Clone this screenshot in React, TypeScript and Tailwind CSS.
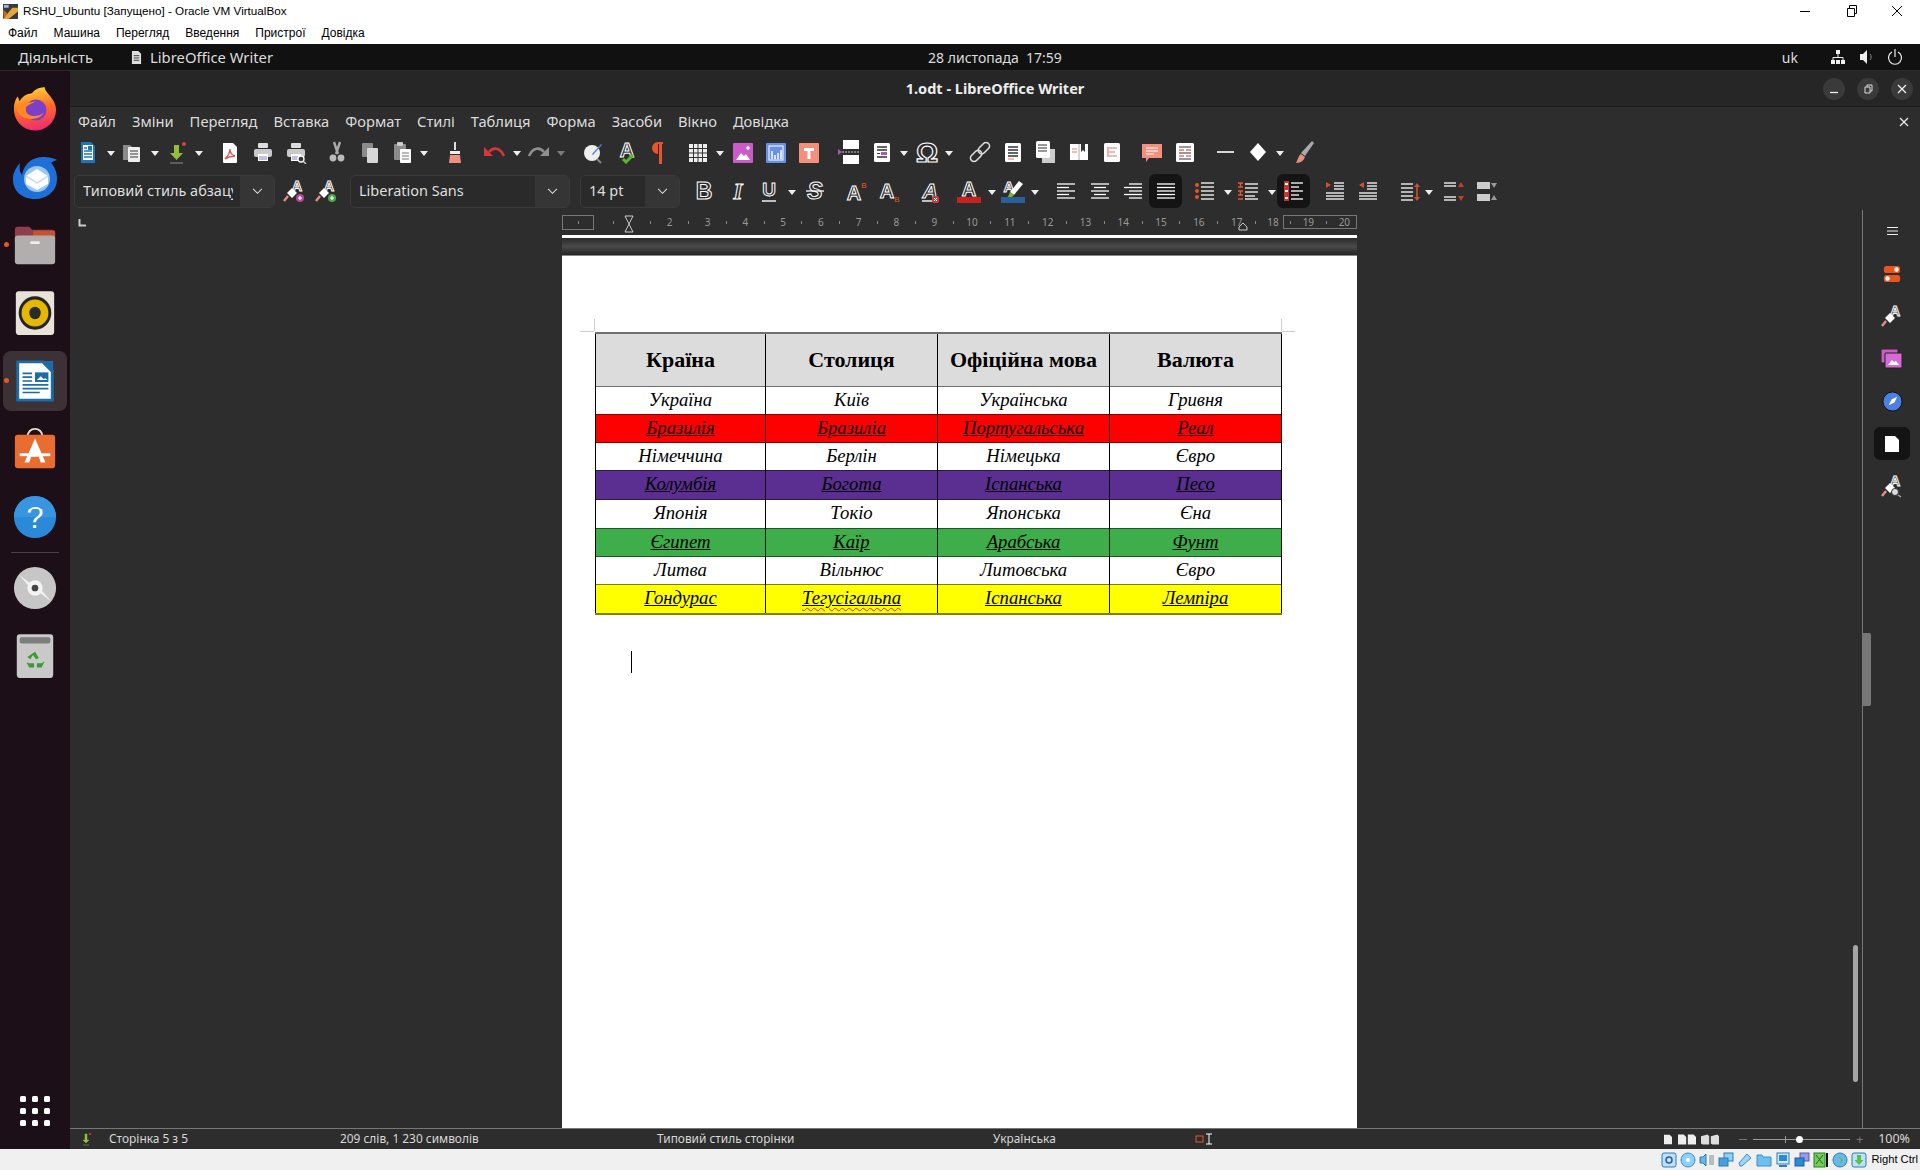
import type { ReactNode } from 'react';
import clsx from 'clsx';

const Svg = ({ children, className }: { children: ReactNode; className?: string }) => (
  <svg viewBox="0 0 24 24" className={clsx('w-[24px] h-[24px] shrink-0', className)}>
    {children}
  </svg>
);

const Caret = ({ className }: { className?: string }) => (
  <svg viewBox="0 0 8 5" className={clsx('w-[8px] h-[5px] shrink-0 mt-[3px]', className)}>
    <path d="M0 0h8L4 5z" fill="#eee" />
  </svg>
);

const Chevron = () => (
  <svg viewBox="0 0 12 8" className="w-[11px] h-[7px]">
    <path d="M1 1l5 5 5-5" fill="none" stroke="#ddd" strokeWidth="1.2" />
  </svg>
);

const Letter = ({ ch, x = 12, y = 18, size = 20, italic, serif, stroke = '#fff', fill = 'none' }: { ch: string; x?: number; y?: number; size?: number; italic?: boolean; serif?: boolean; stroke?: string; fill?: string }) => (
  <text x={x} y={y} textAnchor="middle" fontFamily={serif ? 'Liberation Serif, serif' : 'Liberation Sans, sans-serif'} fontWeight="700" fontStyle={italic ? 'italic' : 'normal'} fontSize={size} fill={fill} stroke={stroke} strokeWidth="1">
    {ch}
  </text>
);

const Rows = ({ rows, color = '#fff' }: { rows: [number, number, number][]; color?: string }) => (
  <>
    {rows.map(([x1, x2, y], i) => (
      <path key={i} d={`M${x1} ${y}H${x2}`} stroke={color} strokeWidth="1.3" />
    ))}
  </>
);

const Page = ({ x = 5, y = 3, w = 14, h = 18, fill = '#fff' }: { x?: number; y?: number; w?: number; h?: number; fill?: string }) => (
  <rect x={x} y={y} width={w} height={h} rx="1.5" fill={fill} />
);

// toolbar row 1
const NewDoc = (p: { className?: string }) => (
  <Svg {...p}>
    <path d="M5 2h10l4 4v17H5z" fill="#1d76b8" />
    <rect x="7" y="5" width="10" height="15" fill="#fff" />
    <path d="M8 8h3M8 11h8M8 14h8M8 17h8" stroke="#1d76b8" strokeWidth="1.3" />
    <rect x="12" y="6" width="4" height="4" fill="#1d76b8" />
  </Svg>
);
const OpenDoc = (p: { className?: string }) => (
  <Svg {...p}>
    <path d="M3 5h7l2 2v13H3z" fill="#8b8b8b" />
    <rect x="8" y="7" width="12" height="15" rx="1" fill="#eee" />
    <path d="M10 11h8M10 14h8M10 17h8" stroke="#777" strokeWidth="1.3" />
  </Svg>
);
const SaveDoc = (p: { className?: string }) => (
  <Svg {...p}>
    <path d="M9 5h5v8h4l-6.5 7L5 13h4z" fill="#95bc3c" />
    <circle cx="19" cy="4" r="2" fill="#d8423a" />
    <path d="M5 23h13" stroke="#777" strokeWidth="1.3" />
  </Svg>
);
const Pdf = (p: { className?: string }) => (
  <Svg {...p}>
    <path d="M5 3h10l4 4v15a1 1 0 0 1-1 1H6a1 1 0 0 1-1-1z" fill="#fff" />
    <path d="M12 9c0 4-3 8-5 10 3-2 7-3 10-3-3-1-5-4-5-7z" fill="none" stroke="#e0504a" strokeWidth="1.3" />
  </Svg>
);
const Printer = ({ className, glass }: { className?: string; glass?: boolean }) => (
  <Svg className={className}>
    <rect x="7" y="3" width="10" height="5" rx="1" fill="#ddd" />
    <rect x="3" y="9" width="18" height="8" rx="2" fill="#c9c9c9" />
    <rect x="7" y="14" width="10" height="7" fill="#fff" />
    <path d="M8 17h8M8 19h8" stroke="#8a7ec8" strokeWidth="1" />
    {glass && (
      <>
        <circle cx="17" cy="19" r="3" fill="#333" stroke="#fff" strokeWidth="1.3" />
        <path d="M19 21l3 3" stroke="#ccc" strokeWidth="1.5" />
      </>
    )}
  </Svg>
);
const Cut = (p: { className?: string }) => (
  <Svg {...p}>
    <path d="M9 2l4 12M15 2l-4 12" stroke="#aaa" strokeWidth="2.4" />
    <circle cx="8" cy="18" r="3.4" fill="#bbb" />
    <circle cx="16" cy="18" r="3.4" fill="#bbb" />
  </Svg>
);
const Copy = (p: { className?: string }) => (
  <Svg {...p}>
    <rect x="4" y="3" width="11" height="14" rx="1" fill="#8b8b8b" />
    <rect x="9" y="8" width="11" height="15" rx="1" fill="#d7d7d7" />
  </Svg>
);
const Paste = (p: { className?: string }) => (
  <Svg {...p}>
    <rect x="4" y="4" width="12" height="16" rx="1" fill="#8b8b8b" />
    <rect x="7" y="2" width="6" height="4" rx="1" fill="#ccc" />
    <rect x="10" y="9" width="11" height="14" rx="1" fill="#fff" />
    <path d="M12 13h7M12 16h7M12 19h7" stroke="#777" strokeWidth="1.2" />
  </Svg>
);
const Clear = (p: { className?: string }) => (
  <Svg {...p}>
    <path d="M11 2h2v8h-2z" fill="#ddd" />
    <path d="M7 11h10v3H7z" fill="#eee" />
    <path d="M7 15h10l1 8H6z" fill="#ee8f80" />
  </Svg>
);
const Undo = (p: { className?: string }) => (
  <Svg {...p}>
    <path d="M7 12c4-5 11-5 15 4" fill="none" stroke="#d8353d" strokeWidth="2.6" />
    <path d="M2 7v9h9z" fill="#d8353d" />
  </Svg>
);
const Redo = (p: { className?: string }) => (
  <Svg {...p}>
    <path d="M17 12c-4-5-11-5-15 4" fill="none" stroke="#8f8f8f" strokeWidth="2.6" />
    <path d="M22 7v9h-9z" fill="#8f8f8f" />
  </Svg>
);
const FindReplace = (p: { className?: string }) => (
  <Svg {...p}>
    <circle cx="11" cy="13" r="8" fill="#eee" />
    <path d="M11 14l9-10 1 1-9 10z" fill="#4a86d8" />
    <path d="M16 19l4 4" stroke="#888" strokeWidth="2" />
  </Svg>
);
const Spell = (p: { className?: string }) => (
  <Svg {...p}>
    <Letter ch="A" y={17} size={20} />
    <path d="M8 19l3 3 7-7" fill="none" stroke="#5cb531" strokeWidth="3" />
  </Svg>
);
const Pilcrow = (p: { className?: string }) => (
  <Svg {...p}>
    <path d="M10 2h7v2h-1v20h-3V4h-1v10a6 6 0 0 1 0-12z" fill="#e6552c" />
  </Svg>
);
const TableIco = (p: { className?: string }) => (
  <Svg {...p}>
    <path d="M3 4h18v18H3z" fill="#eee" />
    <path d="M3 8.500h18M3 13h18M3 17.500h18M7.500 4v18M12 4v18M16.500 4v18" stroke="#333" strokeWidth="1" />
  </Svg>
);
const ImageIco = (p: { className?: string }) => (
  <Svg {...p}>
    <rect x="2" y="3" width="20" height="20" rx="1" fill="#c95cc8" />
    <path d="M5 20l5-7 3 3 2-2 4 6z" fill="#fff" />
    <circle cx="17" cy="8" r="1.7" fill="#fff" />
  </Svg>
);
const ChartIco = (p: { className?: string }) => (
  <Svg {...p}>
    <rect x="2" y="3" width="20" height="20" rx="1" fill="#6a8fe8" />
    <rect x="5" y="6" width="14" height="14" fill="none" stroke="#fff" strokeWidth="1" />
    <path d="M8 19v-8M11 19v-4M14 19v-6M17 19v-9" stroke="#fff" strokeWidth="1.5" />
  </Svg>
);
const TextBox = (p: { className?: string }) => (
  <Svg {...p}>
    <rect x="2" y="3" width="20" height="20" rx="1" fill="#f48f7b" />
    <path d="M7 8h10v3h-3.500v8h-3v-8H7z" fill="#fff" />
  </Svg>
);
const PageBreak = (p: { className?: string }) => (
  <Svg {...p}>
    <rect x="6" y="0" width="16" height="9" fill="#fff" />
    <rect x="6" y="15" width="16" height="9" fill="#fff" />
    <path d="M1 9l4 3-4 3z" fill="#a55fa8" />
    <path d="M5 12h17" stroke="#ccc" strokeDasharray="2 1" />
  </Svg>
);
const Field = (p: { className?: string }) => (
  <Svg {...p}>
    <Page x={4} y={3} w={16} h={19} />
    <path d="M7 7h10M7 10h10M7 17h10" stroke="#333" strokeWidth="1.3" />
    <rect x="11" y="12" width="6" height="3" fill="#a55fa8" />
    <path d="M7 13.500h3" stroke="#333" />
  </Svg>
);
const Omega = (p: { className?: string }) => (
  <Svg className={clsx('scale-[1.2]', p.className)}>
    <Letter ch="Ω" y={20} size={23} />
  </Svg>
);
const LinkIco = (p: { className?: string }) => (
  <Svg {...p}>
    <g fill="none" stroke="#ddd" strokeWidth="1.6" transform="rotate(-45 12 12)">
      <rect x="0" y="8.500" width="13" height="7" rx="3.500" />
      <rect x="11" y="8.500" width="13" height="7" rx="3.500" />
    </g>
  </Svg>
);
const Footnote = (p: { className?: string }) => (
  <Svg {...p}>
    <Page x={4} y={3} w={16} h={19} />
    <path d="M7 7h10M7 10h10M7 13h10M7 16h10" stroke="#333" strokeWidth="1.3" />
    <path d="M7 19h6" stroke="#e07a6a" />
  </Svg>
);
const Endnote = (p: { className?: string }) => (
  <Svg {...p}>
    <rect x="9" y="9" width="13" height="14" fill="#ccc" />
    <Page x={3} y={1} w={14} h={17} />
    <path d="M5 5h9M5 8h9M5 11h9" stroke="#333" strokeWidth="1.2" />
  </Svg>
);
const Bookmark = (p: { className?: string }) => (
  <Svg {...p}>
    <path d="M3 4h18v16h-18z" fill="#fff" />
    <path d="M12 4v16" stroke="#aaa" />
    <path d="M14 4h4v8l-2-2-2 2z" fill="#333" />
    <path d="M5 9h5M5 12h5" stroke="#e07a6a" />
  </Svg>
);
const CrossRef = (p: { className?: string }) => (
  <Svg {...p}>
    <Page x={4} y={3} w={16} h={19} />
    <path d="M9 8h8M9 12h6M9 16h8M8 7v10" stroke="#e07a6a" strokeWidth="1.2" fill="none" />
  </Svg>
);
const Comment = (p: { className?: string }) => (
  <Svg {...p}>
    <path d="M2 4h20v14H9l-3 4v-4H2z" fill="#f48f7b" />
    <path d="M6 8h12M6 11h12M6 14h8" stroke="#fff" strokeWidth="1.2" />
  </Svg>
);
const Track = (p: { className?: string }) => (
  <Svg {...p}>
    <Page x={3} y={3} w={18} h={19} />
    <path d="M6 7h12M6 13h12M6 19h12" stroke="#333" strokeWidth="1.2" />
    <path d="M6 10h5M13 10h5M6 16h5M13 16h5" stroke="#c33" strokeWidth="1.2" />
  </Svg>
);
const LineIco = (p: { className?: string }) => (
  <Svg {...p}>
    <path d="M3 12h17" stroke="#fff" strokeWidth="1.6" />
  </Svg>
);
const Diamond = (p: { className?: string }) => (
  <Svg {...p}>
    <path d="M12 3l8 9-8 9-8-9z" fill="#fff" />
  </Svg>
);
const Brush = (p: { className?: string }) => (
  <Svg {...p}>
    <path d="M20 1l2 2-9 13-4-3z" fill="#aaa" />
    <path d="M9 14l4 3c-1 3-4 6-9 6 2-3 2-7 5-9z" fill="#e98f80" />
  </Svg>
);

// toolbar row 2
const StyleRoller = ({ className, badge, glass }: { className?: string; badge?: string; glass?: boolean }) => (
  <Svg className={className}>
    <Letter ch="A" x={15} y={12} size={14} />
    <path d="M5 14l5-5 5 5-5 5z" fill="#fff" />
    <path d="M6 17l-4 5" stroke="#e98f80" strokeWidth="2.4" />
    {badge && (
      <>
        <circle cx="18" cy="19" r="4" fill={badge} />
        <path d="M16 19h4M18 17v4" stroke="#fff" strokeWidth="1.2" />
      </>
    )}
    {glass && (
      <>
        <circle cx="15" cy="18" r="3.500" fill="#ddd" stroke="#333" />
        <path d="M18 21l3 2" stroke="#aaa" strokeWidth="1.5" />
      </>
    )}
  </Svg>
);
const Glyph = ({ ch, italic, serif, className, line, strike }: { ch: string; italic?: boolean; serif?: boolean; className?: string; line?: boolean; strike?: boolean }) => (
  <Svg className={className}>
    <Letter ch={ch} y={line ? 17 : 20} size={line ? 19 : 23} italic={italic} serif={serif} />
    {line && <path d="M5 22h14" stroke="#fff" strokeWidth="1.4" />}
    {strike && <path d="M3 12h18" stroke="#fff" strokeWidth="1.3" />}
  </Svg>
);
const Super = (p: { className?: string }) => (
  <Svg {...p}>
    <Letter ch="A" x={10} y={21} size={20} />
    <text x="20" y="9" textAnchor="middle" fontSize="8" fill="#e6552c" fontFamily="Liberation Sans">B</text>
  </Svg>
);
const Sub = (p: { className?: string }) => (
  <Svg {...p}>
    <Letter ch="A" x={10} y={19} size={20} />
    <text x="20" y="23" textAnchor="middle" fontSize="8" fill="#e6552c" fontFamily="Liberation Sans">B</text>
  </Svg>
);
const ClearFmt = (p: { className?: string }) => (
  <Svg {...p}>
    <Letter ch="A" y={19} size={21} italic />
    <path d="M4 22h12" stroke="#fff" strokeWidth="1.4" />
    <rect x="14" y="17" width="7" height="7" rx="2" fill="#d8353d" />
    <path d="M16 19l3 3M19 19l-3 3" stroke="#fff" />
  </Svg>
);
const FontColor = (p: { className?: string }) => (
  <Svg {...p}>
    <Letter ch="A" y={17} size={20} />
    <rect x="0" y="18" width="24" height="6" fill="#c9211e" />
  </Svg>
);
const Highlight = (p: { className?: string }) => (
  <Svg {...p}>
    <Letter ch="A" x={8} y={13} size={15} />
    <path d="M18 2l4 3-9 11-4-3z" fill="#fff" />
    <path d="M9 13l4 3-2 2H7z" fill="#77bc2d" />
    <rect x="0" y="18" width="24" height="6" fill="#2a6099" />
  </Svg>
);
const Align = ({ rows, className }: { rows: [number, number, number][]; className?: string }) => (
  <Svg className={className}>
    <Rows rows={rows} />
  </Svg>
);
const Bullets = (p: { className?: string }) => (
  <Svg {...p}>
    <circle cx="4" cy="6" r="2" fill="#e6552c" />
    <circle cx="4" cy="12" r="2" fill="#e6552c" />
    <circle cx="4" cy="18" r="2" fill="#e6552c" />
    <Rows rows={[[8, 21, 4], [8, 21, 8], [8, 21, 12], [8, 21, 16], [8, 21, 20]]} />
  </Svg>
);
const Numbers = (p: { className?: string }) => (
  <Svg {...p}>
    <path d="M2 4h5M2 8h5M2 12h5M2 16h5M2 20h5M4.500 4v4M4.500 12v4" stroke="#e6552c" strokeWidth="1.4" />
    <Rows rows={[[9, 22, 5], [9, 22, 9], [9, 22, 13], [9, 19, 17], [9, 22, 20]]} />
  </Svg>
);
const Outline = (p: { className?: string }) => (
  <Svg {...p}>
    <rect x="2" y="2" width="5" height="20" fill="#c33" />
    <path d="M3 5h3M3 12h3M3 19h3" stroke="#fff" strokeWidth="2" />
    <Rows rows={[[9, 21, 4], [9, 17, 8], [9, 21, 12], [9, 17, 16], [9, 21, 20]]} />
  </Svg>
);
const Indent = ({ className, out }: { className?: string; out?: boolean }) => (
  <Svg className={className}>
    <path d={out ? 'M8 3v6L3 6z' : 'M3 3v6l5-3z'} fill="#d0502f" />
    <Rows rows={[[11, 21, 4], [11, 21, 7], [11, 21, 10], [3, 21, 14], [3, 21, 17], [3, 21, 20]]} />
  </Svg>
);
const Spacing = (p: { className?: string }) => (
  <Svg {...p}>
    <Rows rows={[[3, 15, 5], [3, 15, 9], [3, 15, 13], [3, 15, 17], [3, 15, 21]]} />
    <path d="M19 4l3 4h-6zM19 22l3-4h-6z" fill="#d0502f" />
    <path d="M19 8v10" stroke="#d0502f" strokeWidth="1.6" />
  </Svg>
);
const ParaInc = (p: { className?: string }) => (
  <Svg {...p}>
    <Rows rows={[[2, 14, 4], [2, 14, 7], [2, 14, 18], [2, 14, 21]]} />
    <path d="M19 3l3 5h-6zM19 22l3-5h-6z" fill="#c63d2b" />
  </Svg>
);
const ParaDec = (p: { className?: string }) => (
  <Svg {...p}>
    <rect x="2" y="3" width="13" height="7" fill="#ccc" />
    <rect x="2" y="15" width="13" height="7" fill="#ccc" />
    <path d="M16 4h6l-3 5zM16 21h6l-3-5z" fill="#999" />
  </Svg>
);

const rightRows: [number, number, number][] = [[8, 21, 5], [3, 21, 8.500], [8, 21, 12], [3, 21, 15.500], [8, 21, 19]];

const Combo = ({ label, className, textW }: { label: string; className: string; textW: string }) => (
  <div className={clsx('flex h-[33px] shrink-0 rounded-[5px] border border-[#3a3a3a] bg-[#2a2a2a] overflow-hidden', className)}>
    <div className={clsx('flex items-center ml-[8px] text-[14.500px] text-[#dedede] whitespace-nowrap overflow-hidden', textW)}>{label}</div>
    <div className="ml-auto w-[34px] flex items-center justify-center bg-[#353535]">
      <Chevron />
    </div>
  </div>
);

// dock icons
const Firefox = () => (
  <svg viewBox="0 0 48 48" className="w-[46px] h-[46px]">
    <defs>
      <linearGradient id="ff" x1="0.3" y1="0" x2="0.5" y2="1">
        <stop offset="0" stopColor="#ffd93a" />
        <stop offset="0.5" stopColor="#ff6d24" />
        <stop offset="1" stopColor="#ef2a72" />
      </linearGradient>
    </defs>
    <path d="M34 1c0 6 12 12 12 24a22 22 0 1 1-44-1c0-6 2-11 4-13l2 5c2-5 8-8 10-8 6 0 2-5 16-7z" fill="url(#ff)" />
    <circle cx="25" cy="25" r="11" fill="#7d3fc8" />
    <path d="M4 22c8-6 15-4 21-6-6 4-13 4-10 11 2 5 12 6 18 1-4 9-26 10-29-6z" fill="#ff8a23" />
  </svg>
);
const Thunderbird = () => (
  <svg viewBox="0 0 48 48" className="w-[48px] h-[48px]">
    <path d="M24 46C10 46 1 37 2 24 3 17 7 12 9 10c-1 6 0 9 2 12C13 10 22 4 32 4c5 0 11 1 14 3-3 1-5 2-6 3 4 4 6 10 6 16 0 12-10 20-22 20z" fill="#1f6fd8" />
    <circle cx="26" cy="26" r="13" fill="#9bc7f2" />
    <path d="M15 23l11-7 11 7v8l-11 6-11-6z" fill="#fff" />
    <path d="M15 23l11 7 11-7" fill="none" stroke="#c9ddf3" strokeWidth="1.5" />
  </svg>
);
const Files = () => (
  <svg viewBox="0 0 48 48" className="w-[46px] h-[46px]">
    <path d="M3 8a3 3 0 0 1 3-3h12l3 3h21a3 3 0 0 1 3 3v12H3z" fill="#8f3f4c" />
    <path d="M22 9h21a2 2 0 0 1 2 2v6H22z" fill="#c7522f" />
    <rect x="3" y="14" width="42" height="30" rx="3" fill="#b2aeae" />
    <rect x="19" y="20" width="10" height="3" rx="1" fill="#eee" />
  </svg>
);
const Rhythmbox = () => (
  <svg viewBox="0 0 48 48" preserveAspectRatio="none" className="w-[46px] h-[50px]">
    <rect x="4" y="3" width="40" height="42" rx="3" fill="#e8e3d9" />
    <ellipse cx="24" cy="24" rx="17" ry="16" fill="#242424" />
    <ellipse cx="24" cy="24" rx="14" ry="13" fill="#e6b800" />
    <circle cx="24" cy="24" r="6" fill="#2b2b2b" />
  </svg>
);
const WriterLogo = () => (
  <svg viewBox="0 0 48 48" className="w-[46px] h-[46px]">
    <path d="M6 4h26l10 10v30H6z" fill="#fff" stroke="#1b6ca8" strokeWidth="3" />
    <path d="M32 3l11 0v11z" fill="#1b6ca8" />
    <rect x="24" y="15" width="14" height="10" fill="#1b6ca8" />
    <path d="M26 23l4-4 3 3 2-1 2 2z" fill="#fff" />
    <path d="M11 16h10M11 20h10M11 24h10M11 28h27M11 32h27M11 36h18" stroke="#1b6ca8" strokeWidth="1.800" />
  </svg>
);
const AppStore = () => (
  <svg viewBox="0 0 48 48" className="w-[46px] h-[46px]">
    <path d="M16 12c0-12 16-12 16 0" fill="none" stroke="#e9d9cc" strokeWidth="2" />
    <rect x="3" y="9" width="42" height="35" rx="3" fill="#e96c30" />
    <path d="M24 13l11 25h-5l-2-6h-8l-2 6h-5z" fill="#fff" />
    <path d="M8 30h32" stroke="#fff" strokeWidth="3" />
  </svg>
);
const Help = () => (
  <svg viewBox="0 0 48 48" className="w-[46px] h-[46px]">
    <circle cx="24" cy="24" r="22" fill="#2b8ad8" />
    <path d="M2 24a22 22 0 0 1 44 0z" fill="#3795e2" />
    <text x="24" y="36" textAnchor="middle" fontFamily="Liberation Sans" fontSize="32" fill="#fff">?</text>
  </svg>
);
const Disc = () => (
  <svg viewBox="0 0 48 48" className="w-[46px] h-[46px]">
    <circle cx="24" cy="24" r="22" fill="#c6c6c6" />
    <path d="M7 10l16 12-3 3zM41 38L25 26l3-3z" fill="#f0f0f0" />
    <circle cx="24" cy="24" r="8" fill="#f3f3f3" />
    <circle cx="24" cy="24" r="3.500" fill="#444" />
  </svg>
);
const Trash = () => (
  <svg viewBox="0 0 48 48" preserveAspectRatio="none" className="w-[46px] h-[50px]">
    <rect x="5" y="3" width="38" height="42" rx="3" fill="#c9c9c9" />
    <rect x="8" y="6" width="32" height="6" rx="2" fill="#7d7d7d" />
    <path d="M24 20l4 6-3 1-3-4-3 4-3-2zM15 30l3 5h5v-4h-5zM34 29l-3 6h-5v-4h5z" fill="#3b9a35" />
  </svg>
);

const dockApps = [
  { el: <Firefox /> },
  { el: <Thunderbird /> },
  { el: <Files />, dot: true },
  { el: <Rhythmbox /> },
  { el: <WriterLogo />, dot: true, active: true },
  { el: <AppStore /> },
  { el: <Help /> },
];

const Dock = () => (
  <aside className="w-[70px] shrink-0 bg-[#1c0f18] flex flex-col items-center pt-[4px] pb-[23px]">
    {dockApps.map((a, i) => (
      <div key={i} className="relative h-[68px] w-full flex items-center justify-center">
        {a.active && <div className="absolute left-[3px] top-[4px] w-[64px] h-[60px] rounded-[8px] bg-[#3c3236]" />}
        {a.dot && <div className="absolute left-[4px] top-[31px] w-[5px] h-[5px] rounded-full bg-[#e9571f]" />}
        <div className="relative">{a.el}</div>
      </div>
    ))}
    <div className="w-[48px] h-px bg-[#4a3f46] my-[1px]" />
    <div className="h-[68px] flex items-center"><Disc /></div>
    <div className="h-[68px] flex items-center"><Trash /></div>
    <div className="mt-auto grid grid-cols-3 gap-[6px]">
      {Array.from({ length: 9 }).map((_, i) => (
        <div key={i} className="w-[6px] h-[6px] rounded-[1.500px] bg-white" />
      ))}
    </div>
  </aside>
);

const VBoxBar = () => (
  <>
    <div className="h-[22px] bg-white flex items-center pl-[3px] font-['Liberation_Sans',sans-serif] text-[11.700px] text-black">
      <svg viewBox="0 0 16 16" className="w-[15px] h-[15px] mr-[5px]">
        <rect width="16" height="16" fill="#3a3a3a" />
        <path d="M0 16L10 4l6 0v4L6 16z" fill="#e8a33d" />
        <path d="M0 6l5 4-4 5z" fill="#c66a1e" />
        <rect x="1" y="1" width="5" height="3" fill="#9fb8d8" />
      </svg>
      RSHU_Ubuntu [Запущено] - Oracle VM VirtualBox
      <div className="ml-auto flex items-center">
        <div className="w-[46px] flex justify-center">
          <svg viewBox="0 0 12 12" className="w-[12px] h-[12px]"><path d="M1 6.500h10" stroke="#000" /></svg>
        </div>
        <div className="w-[46px] flex justify-center">
          <svg viewBox="0 0 12 12" className="w-[12px] h-[12px]"><path d="M2.500 3.500h7v8h-7zM4.500 3.500v-3h7v8h-2" fill="none" stroke="#000" /></svg>
        </div>
        <div className="w-[46px] flex justify-center">
          <svg viewBox="0 0 12 12" className="w-[12px] h-[12px]"><path d="M1 1l10 10M11 1L1 11" stroke="#000" /></svg>
        </div>
      </div>
    </div>
    <div className="h-[22px] bg-white flex items-center gap-[16px] pl-[8px] font-['Liberation_Sans',sans-serif] text-[12px] text-black">
      {['Файл', 'Машина', 'Перегляд', 'Введення', 'Пристрої', 'Довідка'].map((m) => (
        <span key={m}>{m}</span>
      ))}
    </div>
  </>
);

const TopBar = () => (
  <div className="h-[27px] bg-[#111111] border-b border-[#2a2a2a] flex items-center text-[14.800px] text-[#dcdcdc] relative">
    <span className="ml-[18px]">Діяльність</span>
    <svg viewBox="0 0 12 14" className="w-[11px] h-[13px] ml-[38px]">
      <path d="M1 0h7l3 3v11H1z" fill="#ddd" />
      <path d="M3 5h6M3 7.500h6M3 10h6" stroke="#333" />
    </svg>
    <span className="ml-[8px]">LibreOffice Writer</span>
    <span className="absolute left-[70px] right-0 text-center text-[14px] pointer-events-none">28 листопада&nbsp;&nbsp;17:59</span>
    <span className="ml-auto text-[14px]">uk</span>
    <svg viewBox="0 0 16 16" className="w-[16px] h-[16px] ml-[32px]">
      <path d="M6 1h4v4H6zM1 11h4v4H1zM11 11h4v4h-4zM6 11h4v4H6z" fill="#eee" />
      <path d="M8 5v4M3 11V8.500h10V11" fill="none" stroke="#eee" />
    </svg>
    <svg viewBox="0 0 16 16" className="w-[16px] h-[16px] ml-[13px]">
      <path d="M1 5h3l4-4v14l-4-4H1z" fill="#eee" />
      <path d="M11 5c1.500 2 1.500 4 0 6" stroke="#888" fill="none" />
    </svg>
    <svg viewBox="0 0 16 16" className="w-[16px] h-[16px] ml-[12px] mr-[17px]">
      <path d="M5 3a6.500 6.500 0 1 0 6 0M8 0v8" fill="none" stroke="#eee" strokeWidth="1.200" />
    </svg>
  </div>
);

const CircleBtn = ({ children }: { children: ReactNode }) => (
  <div className="w-[22px] h-[22px] rounded-full bg-[#3a3a3a] flex items-center justify-center">{children}</div>
);

const TitleBar = () => (
  <div className="h-[36px] shrink-0 bg-[#262626] border-b border-[#1a1a1a] flex items-center relative">
    <span className="absolute inset-x-0 text-center text-[14.500px] font-bold text-[#eeeeee]">1.odt - LibreOffice Writer</span>
    <div className="ml-auto flex gap-[12px] mr-[7px]">
      <CircleBtn>
        <svg viewBox="0 0 10 10" className="w-[10px] h-[10px]"><path d="M1 8.500h8" stroke="#eee" strokeWidth="1.300" /></svg>
      </CircleBtn>
      <CircleBtn>
        <svg viewBox="0 0 10 10" className="w-[10px] h-[10px]"><path d="M2 3h5v6H2zM4 3V1h5v6H7" fill="none" stroke="#ddd" /></svg>
      </CircleBtn>
      <CircleBtn>
        <svg viewBox="0 0 10 10" className="w-[10px] h-[10px]"><path d="M1 1l8 8M9 1L1 9" stroke="#eee" strokeWidth="1.300" /></svg>
      </CircleBtn>
    </div>
  </div>
);

const MenuBar = () => (
  <div className="h-[29px] shrink-0 flex items-center gap-[16px] pl-[8px] text-[14.700px] text-[#dcdcdc]">
    {['Файл', 'Зміни', 'Перегляд', 'Вставка', 'Формат', 'Стилі', 'Таблиця', 'Форма', 'Засоби', 'Вікно', 'Довідка'].map((m) => (
      <span key={m}>{m}</span>
    ))}
    <svg viewBox="0 0 10 10" className="w-[10px] h-[10px] ml-auto mr-[11px]"><path d="M1 1l8 8M9 1L1 9" stroke="#eee" strokeWidth="1.200" /></svg>
  </div>
);

const ToolbarOne = () => (
  <div className="h-[31px] shrink-0 flex items-center pl-[6px]">
    <NewDoc /><Caret className="ml-[7px]" />
    <OpenDoc className="ml-[5px]" /><Caret className="ml-[7px]" />
    <SaveDoc className="ml-[6px]" /><Caret className="ml-[6px]" />
    <Pdf className="ml-[15px]" />
    <Printer className="ml-[9px]" />
    <Printer className="ml-[9px]" glass />
    <Cut className="ml-[17px]" />
    <Copy className="ml-[9px]" />
    <Paste className="ml-[8px]" /><Caret className="ml-[6px]" />
    <Clear className="ml-[15px]" />
    <Undo className="ml-[15px]" /><Caret className="ml-[7px]" />
    <Redo className="ml-[6px]" /><Caret className="ml-[6px] opacity-40" />
    <FindReplace className="ml-[16px]" />
    <Spell className="ml-[10px]" />
    <Pilcrow className="ml-[7px]" />
    <TableIco className="ml-[16px]" /><Caret className="ml-[6px]" />
    <ImageIco className="ml-[7px]" />
    <ChartIco className="ml-[9px]" />
    <TextBox className="ml-[9px]" />
    <PageBreak className="ml-[16px]" />
    <Field className="ml-[9px]" /><Caret className="ml-[6px]" />
    <Omega className="ml-[7px]" /><Caret className="ml-[6px]" />
    <LinkIco className="ml-[15px]" />
    <Footnote className="ml-[9px]" />
    <Endnote className="ml-[8px]" />
    <Bookmark className="ml-[10px]" />
    <CrossRef className="ml-[9px]" />
    <Comment className="ml-[16px]" />
    <Track className="ml-[9px]" />
    <LineIco className="ml-[17px]" />
    <Diamond className="ml-[8px]" /><Caret className="ml-[6px]" />
    <Brush className="ml-[8px]" />
  </div>
);

const ToolbarTwo = () => (
  <div className="h-[48px] shrink-0 flex items-center pl-[4px]">
    <Combo label="Типовий стиль абзацу" className="w-[201px]" textW="w-[150px]" />
    <StyleRoller className="ml-[7px]" badge="#b04a9b" />
    <StyleRoller className="ml-[8px]" badge="#4aa84a" />
    <Combo label="Liberation Sans" className="w-[220px] ml-[12px]" textW="w-[170px]" />
    <Combo label="14 pt" className="w-[100px] ml-[10px]" textW="w-[50px]" />
    <Glyph ch="B" className="ml-[12px]" />
    <Glyph ch="I" italic serif className="ml-[10px]" />
    <Glyph ch="U" line className="ml-[7px]" /><Caret className="ml-[7px]" />
    <Glyph ch="S" italic strike className="ml-[7px]" />
    <Super className="ml-[17px]" />
    <Sub className="ml-[9px]" />
    <ClearFmt className="ml-[17px]" />
    <FontColor className="ml-[15px]" /><Caret className="ml-[7px]" />
    <Highlight className="ml-[5px]" /><Caret className="ml-[6px]" />
    <Align className="ml-[15px]" rows={[[3, 21, 5], [3, 15, 8.500], [3, 21, 12], [3, 15, 15.500], [3, 21, 19]]} />
    <Align className="ml-[10px]" rows={[[3, 21, 5], [6, 18, 8.500], [3, 21, 12], [6, 18, 15.500], [3, 21, 19]]} />
    <Align className="ml-[9px]" rows={rightRows} />
    <div className="ml-[4px] w-[33px] h-[34px] rounded-[6px] bg-[#141414] flex items-center justify-center">
      <Align rows={[[3, 21, 5], [3, 21, 8.500], [3, 21, 12], [3, 21, 15.500], [3, 21, 19]]} />
    </div>
    <Bullets className="ml-[11px]" /><Caret className="ml-[7px]" />
    <Numbers className="ml-[4px]" /><Caret className="ml-[8px]" />
    <div className="ml-[1px] w-[33px] h-[34px] rounded-[6px] bg-[#141414] flex items-center justify-center">
      <Outline />
    </div>
    <Indent className="ml-[13px]" />
    <Indent className="ml-[9px]" out />
    <Spacing className="ml-[18px]" /><Caret className="ml-[3px]" />
    <ParaInc className="ml-[9px]" />
    <ParaDec className="ml-[9px]" />
  </div>
);

const rulerNums = Array.from({ length: 17 }, (_, i) => i + 1);

const Ruler = () => (
  <div className="relative h-[20px] flex items-start text-[10px] leading-[15px] text-[#999999]">
    <div className="w-[32px] h-[15px] border border-[#777777] flex items-center justify-center shrink-0">
      <span className="w-px h-[3px] bg-[#888888]" />
    </div>
    <div className="w-[9.500px] shrink-0" />
    <div className="w-[19px] h-[15px] flex items-center justify-center shrink-0"><span className="w-px h-[3px] bg-[#888888]" /></div>
    {rulerNums.map((n) => (
      <div key={n} className="flex shrink-0">
        <span className="w-[18.800px] text-center">{n === 1 ? '' : n}</span>
        <span className="w-[19px] h-[15px] flex items-center justify-center"><span className="w-px h-[3px] bg-[#888888]" /></span>
      </div>
    ))}
    <span className="w-[16px] text-center shrink-0">18</span>
    <div className="ml-auto w-[74px] h-[14px] border border-[#777777] flex items-center justify-around shrink-0">
      <span className="w-px h-[3px] bg-[#888888]" />
      <span>19</span>
      <span className="w-px h-[3px] bg-[#888888]" />
      <span>20</span>
    </div>
    <svg viewBox="0 0 10 18" className="absolute left-[62px] top-0 w-[10px] h-[18px]">
      <path d="M1 1h8L5 9l4 8H1l4-8z" fill="none" stroke="#cccccc" />
    </svg>
    <svg viewBox="0 0 10 8" className="absolute left-[676px] top-[8px] w-[10px] h-[8px]">
      <path d="M5 0l4 4v3H1V4z" fill="none" stroke="#cccccc" />
    </svg>
  </div>
);

type Row = { cells: string[]; bg?: string; line: string; h: string; u?: boolean };

const rows: Row[] = [
  { cells: ['Україна', 'Київ', 'Українська', 'Гривня'], line: 'border-[#555555]', h: 'h-[28px]' },
  { cells: ['Бразилія', 'Бразиліа', 'Португальська', 'Реал'], bg: 'bg-[#ff0000]', line: 'border-[#800000]', h: 'h-[28px]', u: true },
  { cells: ['Німеччина', 'Берлін', 'Німецька', 'Євро'], line: 'border-[#800000]', h: 'h-[28px]' },
  { cells: ['Колумбія', 'Богота', 'Іспанська', 'Песо'], bg: 'bg-[#5a2f91]', line: 'border-[#2d1848]', h: 'h-[29px]', u: true },
  { cells: ['Японія', 'Токіо', 'Японська', 'Єна'], line: 'border-[#2d1848]', h: 'h-[29px]' },
  { cells: ['Єгипет', 'Каїр', 'Арабська', 'Фунт'], bg: 'bg-[#3dae49]', line: 'border-[#1e5724]', h: 'h-[28px]', u: true },
  { cells: ['Литва', 'Вільнюс', 'Литовська', 'Євро'], line: 'border-[#1e5724]', h: 'h-[28px]' },
  { cells: ['Гондурас', 'Тегусігальпа', 'Іспанська', 'Лемпіра'], bg: 'bg-[#ffff00]', line: 'border-[#808000]', h: 'h-[30px]', u: true },
];

const Cell = ({ text, u }: { text: string; u?: boolean }) => {
  if (text === 'Тегусігальпа') {
    return (
      <span className="underline">
        <span className="underline decoration-wavy decoration-[#e0202a] decoration-1 underline-offset-[3px]">{text}</span>
      </span>
    );
  }
  return <span className={clsx(u && 'underline')}>{text}</span>;
};

const DocTable = () => (
  <table className="w-[686px] table-fixed border-collapse font-['Liberation_Serif',serif] text-black border-b-2 border-[#808000]">
    <colgroup>
      <col className="w-[170px]" />
      <col className="w-[172px]" />
      <col className="w-[172px]" />
      <col className="w-[172px]" />
    </colgroup>
    <thead>
      <tr className="h-[53px] bg-[#dcdcdc] border-t-2 border-[#707070]">
        {['Країна', 'Столиця', 'Офіційна мова', 'Валюта'].map((h) => (
          <th key={h} className="border-x border-black text-[22px] font-bold p-0">{h}</th>
        ))}
      </tr>
    </thead>
    <tbody>
      {rows.map((r, i) => (
        <tr key={i} className={clsx(r.h, r.bg ?? 'bg-white')}>
          {r.cells.map((c) => (
            <td key={c} className={clsx('border-x border-x-black border-t text-center italic text-[18.700px] leading-none p-0', i === 0 ? 'border-t-[#707070]' : rows[i - 1].bg ? rows[i - 1].line : r.line)}>
              <Cell text={c} u={r.u} />
            </td>
          ))}
        </tr>
      ))}
    </tbody>
  </table>
);

const DocArea = () => (
  <div className="relative flex-1 min-w-0 flex justify-center overflow-hidden">
    <svg viewBox="0 0 8 8" className="absolute left-[8px] top-[4px] w-[8px] h-[8px]">
      <path d="M1.500 0v6.500H8" fill="none" stroke="#cccccc" strokeWidth="2" />
    </svg>
    <div className="w-[795px] flex flex-col">
      <Ruler />
      <div className="h-[3px] bg-white shrink-0" />
      <div className="h-[17px] shrink-0 bg-gradient-to-b from-[#2a2a2a] via-[#4a4a4a] to-[#252525]" />
      <div className="flex-1 bg-white border-t border-[#888888] pl-[33px] pt-[76px]">
        <div className="relative w-[686px]">
          <span className="absolute left-[-1px] top-[-13px] w-px h-[12px] bg-[#cccccc]" />
          <span className="absolute left-[-15px] top-[-1px] w-[14px] h-px bg-[#cccccc]" />
          <span className="absolute right-[-1px] top-[-13px] w-px h-[12px] bg-[#cccccc]" />
          <span className="absolute right-[-14px] top-[-1px] w-[13px] h-px bg-[#cccccc]" />
          <DocTable />
        </div>
        <div className="w-px h-[22px] bg-black ml-[36px] mt-[36px]" />
      </div>
    </div>
  </div>
);

const Sidebar = () => (
  <div className="relative w-[58px] shrink-0 mt-[-5px] border-l border-[#777777] flex flex-col items-center">
    <div className="absolute left-0 top-[423px] w-[8px] h-[73px] bg-[#777777] rounded-r-[2px]" />
    <div className="flex flex-col items-center ml-[1px]">
      <div className="h-[42.500px] flex items-center">
        <svg viewBox="0 0 16 12" className="w-[11px] h-[10px]"><path d="M0 1h16M0 6h16M0 11h16" stroke="#eee" strokeWidth="1.500" /></svg>
      </div>
      <div className="h-[42.500px] flex items-center">
        <svg viewBox="0 0 20 18" className="w-[18px] h-[18px]">
          <rect x="1" y="0" width="18" height="8" rx="3" fill="#e9541f" />
          <rect x="1" y="10" width="18" height="8" rx="3" fill="#e9541f" />
          <circle cx="15" cy="4" r="2.500" fill="#fff" />
          <circle cx="5" cy="14" r="2.500" fill="#fff" />
        </svg>
      </div>
      <div className="h-[42.500px] flex items-center"><StyleRoller /></div>
      <div className="h-[42.500px] flex items-center">
        <svg viewBox="0 0 22 20" className="w-[22px] h-[20px]">
          <rect x="0" y="0" width="17" height="14" rx="1" fill="#c95cc8" stroke="#222" />
          <rect x="4" y="4" width="17" height="15" rx="1" fill="#d66bd6" stroke="#222" />
          <path d="M7 16l4-5 2 2 2-1 3 4z" fill="#fff" />
        </svg>
      </div>
      <div className="h-[42.500px] flex items-center">
        <svg viewBox="0 0 22 22" className="w-[21px] h-[21px]">
          <circle cx="11" cy="11" r="10" fill="#4c7fe0" stroke="#111" />
          <path d="M7 15l3-6 6-3-3 6z" fill="#fff" />
        </svg>
      </div>
      <div className="h-[42.500px] flex items-center justify-center">
        <div className="w-[36px] h-[33px] rounded-[6px] bg-[#141414] flex items-center justify-center">
          <svg viewBox="0 0 14 16" className="w-[14px] h-[16px]"><path d="M0 0h10l4 4v12H0z" fill="#fff" /></svg>
        </div>
      </div>
      <div className="h-[42.500px] flex items-center"><StyleRoller glass /></div>
    </div>
  </div>
);

const StatusBar = () => (
  <div className="h-[21px] shrink-0 bg-[#2d2d2d] border-t border-[#777777] flex items-center text-[11.900px] text-[#d8d8d8]">
    <div className="w-[270px] flex items-center pl-[10px] shrink-0">
      <svg viewBox="0 0 12 14" className="w-[12px] h-[14px] mr-[17px]">
        <path d="M5 2v6H3l3 3 3-3H7V2zM3 13h6" fill="#95bc3c" stroke="#95bc3c" strokeWidth="0.500" />
        <circle cx="10" cy="2" r="1" fill="#d8423a" />
      </svg>
      Сторінка 5 з 5
    </div>
    <div className="w-[317px] shrink-0">209 слів, 1 230 символів</div>
    <div className="w-[336px] shrink-0">Типовий стиль сторінки</div>
    <div className="w-[202px] shrink-0">Українська</div>
    <svg viewBox="0 0 20 12" className="w-[20px] h-[12px]">
      <rect x="1" y="3" width="7" height="6" fill="none" stroke="#e6552c" />
      <path d="M11 1h6M14 1v10M11 11h6" stroke="#fff" />
    </svg>
    <div className="ml-auto flex items-center">
      <svg viewBox="0 0 10 12" className="w-[8px] h-[11px]"><path d="M0 0h7l3 3v9H0z" fill="#eee" /></svg>
      <svg viewBox="0 0 22 12" className="w-[18px] h-[11px] ml-[6px]"><path d="M0 0h7l3 3v9H0zM12 0h7l3 3v9H12z" fill="#eee" /></svg>
      <svg viewBox="0 0 22 12" className="w-[18px] h-[11px] ml-[5px]"><path d="M0 2l8-2 2 2v10H2l-2-1zM12 2l8-2 2 2v10h-8l-2-1z" fill="#ddd" /></svg>
      <span className="w-[8px] h-px bg-[#777777] ml-[20px]" />
      <div className="relative w-[97px] h-px bg-[#999999] ml-[6px]">
        <span className="absolute left-[32px] top-[-3px] w-px h-[7px] bg-[#999999]" />
        <span className="absolute left-[43px] top-[-3px] w-[7px] h-[7px] rounded-full bg-white" />
      </div>
      <span className="w-[8px] h-[8px] ml-[6px] text-[#777777] text-[13px] leading-[8px]">+</span>
      <span className="w-[56px] text-right pr-[10px] text-[12.500px]">100%</span>
    </div>
  </div>
);

const VBoxIcon = ({ children }: { children: ReactNode }) => (
  <svg viewBox="0 0 16 16" className="w-[16px] h-[16px] shrink-0">{children}</svg>
);

const VBoxStatus = () => (
  <div className="h-[21px] shrink-0 bg-[#f0f0f0] flex items-center justify-end gap-[3px] pr-[2px] font-['Liberation_Sans',sans-serif] text-[11.200px] text-black">
    <VBoxIcon><rect x="1" y="1" width="14" height="14" rx="2" fill="#bfe0f6" stroke="#2b7cb8" /><circle cx="8" cy="8" r="3" fill="none" stroke="#2b5f8f" strokeWidth="1.500" /></VBoxIcon>
    <VBoxIcon><circle cx="8" cy="8" r="7" fill="#8fd0f5" stroke="#3a8fc8" /><circle cx="8" cy="8" r="2" fill="#fff" /></VBoxIcon>
    <VBoxIcon><path d="M1 5h3l3-3v12l-3-3H1z" fill="#6ab8ea" stroke="#2b7cb8" /><path d="M10 3h5v10h-5z" fill="#bbb" /></VBoxIcon>
    <VBoxIcon><rect x="6" y="1" width="9" height="8" fill="#8fd0f5" stroke="#2b7cb8" /><rect x="1" y="6" width="9" height="8" fill="#4aa0dc" stroke="#2b7cb8" /></VBoxIcon>
    <VBoxIcon><path d="M2 11l8-9 4 4-9 8H3z" fill="#9ad6f7" stroke="#3a8fc8" /></VBoxIcon>
    <VBoxIcon><path d="M1 3h5l1 2h8v9H1z" fill="#6cc0f0" stroke="#3a8fc8" /></VBoxIcon>
    <VBoxIcon><rect x="2" y="1" width="12" height="11" fill="#cdeafa" stroke="#2b7cb8" /><rect x="4" y="3" width="8" height="6" fill="#2b8ad0" /><path d="M4 14h8" stroke="#2b7cb8" strokeWidth="2" /></VBoxIcon>
    <VBoxIcon><rect x="6" y="1" width="9" height="8" fill="#9a9ae0" stroke="#5a5ab8" /><rect x="1" y="6" width="9" height="8" fill="#2b8ad0" stroke="#1b5f9f" /></VBoxIcon>
    <VBoxIcon><rect x="1" y="1" width="11" height="14" fill="#6fcf57" stroke="#2d7d2d" /><path d="M3 3l7 9M10 3l-7 9" stroke="#2d5d2d" /><rect x="13" y="1" width="2" height="14" fill="#111" /></VBoxIcon>
    <VBoxIcon><circle cx="8" cy="8" r="7" fill="#6ab8ea" stroke="#2b7cb8" /><path d="M5 3l6 5-4 5 2-5z" fill="#55c344" /></VBoxIcon>
    <VBoxIcon><rect x="1" y="1" width="14" height="14" rx="2" fill="#bfe0f6" stroke="#2b7cb8" /><path d="M6 3h4v5h2.500L8 13 3.500 8H6z" fill="#55c344" /></VBoxIcon>
    <span className="ml-[1px]">Right Ctrl</span>
  </div>
);

export default function App() {
  return (
    <div className="w-[1920px] h-[1170px] flex flex-col overflow-hidden font-['Noto_Sans',sans-serif]">
      <VBoxBar />
      <TopBar />
      <div className="flex-1 min-h-0 flex">
        <Dock />
        <main className="flex-1 min-w-0 flex flex-col bg-[#2d2d2d]">
          <TitleBar />
          <MenuBar />
          <ToolbarOne />
          <ToolbarTwo />
          <div className="flex-1 min-h-0 flex">
            <DocArea />
            <div className="w-[13px] shrink-0 flex justify-center">
              <div className="w-[5px] h-[137px] mt-[730px] rounded-full bg-[#a5a5a5]" />
            </div>
            <Sidebar />
          </div>
          <StatusBar />
        </main>
      </div>
      <VBoxStatus />
    </div>
  );
}
